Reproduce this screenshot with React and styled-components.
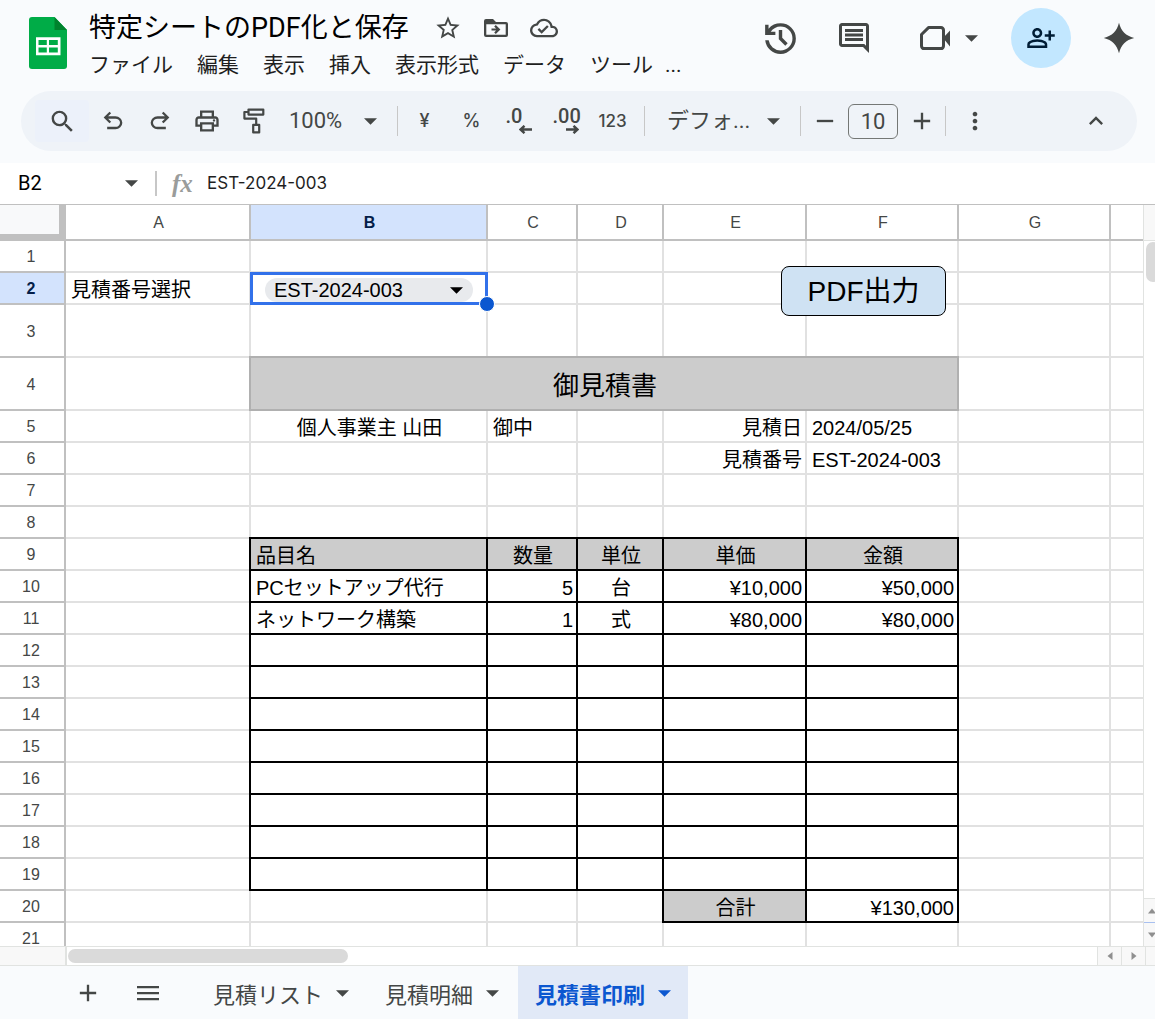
import React from "react";
import styled, { createGlobalStyle, css } from "styled-components";
import {
  MdAdd,
  MdKeyboardArrowUp,
  MdMoreVert,
  MdOutlineCloudDone,
  MdOutlineComment,
  MdOutlinePersonAddAlt,
  MdOutlinePrint,
  MdRemove,
  MdSearch,
  MdStarBorder,
} from "react-icons/md";

const sheetFont = '"Liberation Sans", "Noto Sans CJK JP", sans-serif';
const uiFont = 'Roboto, "Noto Sans CJK JP", sans-serif';
const numberFont = 'Inter, "Noto Sans CJK JP", sans-serif';
const ink = "#444746";
const gridLine = "#e1e1e1";
const headLine = "#c0c0c0";
const shade = "#cccccc";

const GlobalStyle = createGlobalStyle`
  * { box-sizing: border-box; }
  body { margin: 0; background: #ffffff; font-family: ${uiFont}; }
  button, input, select { font: inherit; color: inherit; margin: 0; }
`;

const Page = styled.div`
  display: flex;
  flex-direction: column;
  height: 100vh;
  overflow: hidden;
  background: #ffffff;
`;

const Top = styled.header`
  background: #f9fbfd;
  padding-bottom: 12px;
`;

const TitleBar = styled.div`
  display: flex;
  justify-content: space-between;
  height: 91px;
  padding: 0 18px 0 29px;
`;

const Brand = styled.div`
  display: flex;
  gap: 22px;
`;

const LogoLink = styled.a`
  display: block;
  padding-top: 17px;
  height: 69px;
`;

const TitleColumn = styled.div`
  display: flex;
  flex-direction: column;
  gap: 4px;
  padding-top: 9px;
`;

const TitleRow = styled.div`
  display: flex;
  align-items: center;
  height: 38px;
  gap: 20px;
`;

const DocTitle = styled.h1`
  margin: 0 5px 0 0;
  font: 400 27px/38px ${uiFont};
  color: #000000;
  white-space: nowrap;
`;

const Menu = styled.nav`
  display: flex;
  gap: 24px;
`;

const IconButton = styled.button`
  display: flex;
  align-items: center;
  justify-content: center;
  flex: none;
  padding: 0;
  border: 0;
  background: transparent;
  color: ${ink};
  cursor: pointer;
`;

const MenuButton = styled(IconButton)`
  font: 400 21px/28px ${uiFont};
  color: #1f1f1f;
  white-space: nowrap;
`;

const Actions = styled.div`
  display: flex;
  align-items: center;
  height: 76px;
  gap: 30px;
`;

const ItemGroup = styled.div`
  display: flex;
  align-items: center;
  gap: ${(p) => p.$gap}px;
`;

const ShareButton = styled(IconButton)`
  width: 60px;
  height: 60px;
  margin-left: 3px;
  border-radius: 50%;
  background: #c2e7ff;
  color: #001d35;
`;

const Toolbar = styled.div`
  display: flex;
  align-items: center;
  height: 60px;
  margin: 0 18px 0 21px;
  padding: 0 18px 0 14px;
  border-radius: 30px;
  background: #eff3f8;
  color: ${ink};
`;

const Tool = styled(IconButton)`
  width: 47px;
  height: 42px;
  font: 500 ${(p) => p.$size || 18}px/24px ${numberFont};
`;

const SearchTool = styled(Tool)`
  width: 54px;
  border-radius: 4px;
  background: #ecf1fa;
`;

const LastTool = styled(Tool)`
  margin-left: auto;
`;

const Decimal = styled.span`
  display: flex;
  flex-direction: column;
  width: 26px;
  font: 500 20px/17px ${uiFont};
  text-align: left;

  svg {
    align-self: flex-end;
  }
`;

const Divider = styled.span`
  width: 1px;
  height: 30px;
  flex: none;
  margin: 0 ${(p) => p.$after || 0}px 0 ${(p) => p.$before || 0}px;
  background: #c7c7c7;
`;

const Picker = styled.span`
  display: grid;
  align-items: center;
  flex: none;
  width: ${(p) => p.$width}px;
  margin: 0 20px 0 ${(p) => p.$before}px;

  select {
    grid-area: 1 / 1;
    appearance: none;
    padding: 0;
    border: 0;
    background: transparent;
    font: 400 22px/32px ${uiFont};
    outline: 0;
  }

  svg {
    grid-area: 1 / 1;
    justify-self: end;
    pointer-events: none;
  }
`;

const SizeInput = styled.input`
  width: 50px;
  height: 35px;
  padding: 0;
  border: 1px solid #747775;
  border-radius: 6px;
  background: transparent;
  text-align: center;
  font: 400 22px/32px ${uiFont};
`;

const FormulaBar = styled.div`
  display: flex;
  align-items: center;
  flex: none;
  height: 42px;
  padding-left: 18px;
  border-bottom: 1px solid ${headLine};
`;

const NameBox = styled.input`
  width: 107px;
  padding: 0 0 2px;
  border: 0;
  font: 400 20px/24px ${uiFont};
  color: #000000;
`;

const FormulaDivider = styled.span`
  width: 2px;
  height: 25px;
  margin: 0 15px 0 17px;
  background: #c7c7c7;
`;

const Fx = styled.label`
  width: 35px;
  font: italic 700 25px/28px "Liberation Serif", serif;
  color: #9a9c9b;
`;

const FormulaInput = styled.input`
  flex: 1;
  min-width: 0;
  padding: 0 0 2px;
  border: 0;
  font: 400 17px/24px ${numberFont};
  color: #1f1f1f;
`;

const Main = styled.main`
  display: flex;
  flex: 1;
  min-height: 0;
`;

const GridView = styled.div`
  position: relative;
  flex: 1;
  min-width: 0;
  overflow: hidden;
`;

const Sheet = styled.table`
  width: 100%;
  table-layout: fixed;
  border-collapse: collapse;
  font: 400 20px/24px ${sheetFont};
  color: #000000;
`;

const Col = styled.col`
  width: ${(p) => (p.$width ? `${p.$width}px` : "auto")};
`;

const Row = styled.tr`
  height: ${(p) => p.$height}px;
`;

const HeadCell = styled.th`
  padding: 2px 0 0 2px;
  border-right: 2px solid ${headLine};
  border-bottom: 2px solid ${headLine};
  background: ${(p) => (p.$active ? "#d3e3fd" : "#ffffff")};
  color: ${(p) => (p.$active ? "#041e49" : ink)};
  font: ${(p) => (p.$active ? 700 : 400)} 16px/20px ${sheetFont};

  ${(p) => p.$open && css`border-right: 0;`}
`;

const RowHead = styled(HeadCell)`
  padding: 2px 2px 0 0;
`;

const Corner = styled.th`
  padding: 0;
  border-right: 2px solid ${headLine};
  border-bottom: 2px solid ${headLine};
  background: #f8f9fa;
  box-shadow: inset -5px -5px 0 ${headLine};
`;

// A drawn border is "double" so that it wins over plain grid lines where they cross.
const Cell = styled.td`
  position: relative;
  padding: 4px 3px 0 5px;
  border-right: 2px ${(p) => (p.$right ? "double" : "solid")} ${(p) => p.$right || gridLine};
  border-bottom: 2px ${(p) => (p.$bottom ? "double" : "solid")} ${(p) => p.$bottom || gridLine};
  background: ${(p) => (p.$shaded ? shade : "transparent")};
  text-align: ${(p) => p.$align || "left"};
  font-size: ${(p) => (p.$large ? 26 : 20)}px;
  white-space: nowrap;

  ${(p) => p.$open && css`border-right: 0;`}
`;

const Selection = styled.div`
  position: absolute;
  inset: -1px -2px -2px -1px;
  border: 3px solid #3271ea;
  pointer-events: none;

  &::after {
    content: "";
    position: absolute;
    right: -10px;
    bottom: -10px;
    width: 14px;
    height: 14px;
    border: 1px solid #ffffff;
    border-radius: 50%;
    background: #0b57d0;
  }
`;

const Chip = styled.span`
  display: grid;
  align-items: center;
  height: 24px;
  margin: 0 10px 0 9px;
  border-radius: 12px;
  background: #e8eaed;

  select {
    grid-area: 1 / 1;
    appearance: none;
    height: 24px;
    padding: 0 9px;
    border: 0;
    background: transparent;
    font: 400 20px/24px ${sheetFont};
  }

  svg {
    grid-area: 1 / 1;
    justify-self: end;
    margin-right: 10px;
    pointer-events: none;
  }
`;

const ExportButton = styled.button`
  position: absolute;
  left: 781px;
  top: 61px;
  width: 165px;
  height: 50px;
  padding: 2px 0 0;
  border: 1px solid #000000;
  border-radius: 8px;
  background: #cfe2f3;
  font: 400 28px/36px ${sheetFont};
  color: #000000;
`;

const VerticalBar = styled.div`
  display: flex;
  flex-direction: column;
  flex: none;
  width: 12px;
  overflow: hidden;
  border-left: 1px solid #e1e3e1;
`;

const BarCap = styled.div`
  flex: none;
  height: 36px;
  border-bottom: 1px solid #e1e3e1;
  background: #f8f8f8;
`;

const BarTrack = styled.div`
  flex: 1;
  padding: 1px 0 0 2px;
`;

const VerticalThumb = styled.div`
  width: 14px;
  height: 40px;
  border-radius: 7px;
  background: #dadada;
`;

const BarButton = styled(IconButton)`
  width: ${(p) => (p.$wide ? 24 : 16)}px;
  height: ${(p) => (p.$wide ? 18 : 24)}px;
  border-top: ${(p) => (p.$wide ? 0 : 1)}px solid ${(p) => p.$line || "#e1e3e1"};
  border-left: ${(p) => (p.$wide ? 1 : 0)}px solid #e1e3e1;
  background: #f8f8f8;
  color: #8f8f8f;
`;

const HorizontalBar = styled.div`
  display: flex;
  flex: none;
  height: 19px;
  border-top: 1px solid #e1e3e1;
`;

const BarStart = styled.div`
  width: 67px;
  border-right: 2px solid #e1e3e1;
  background: #f8f8f8;
`;

const HorizontalTrack = styled.div`
  flex: 1;
  padding: 2px 1px;
`;

const HorizontalThumb = styled.div`
  width: 280px;
  height: 14px;
  border-radius: 7px;
  background: #dadada;
`;

const BarEnd = styled.div`
  width: 10px;
  border-left: 1px solid #e1e3e1;
  background: #f8f8f8;
`;

const TabBar = styled.footer`
  display: flex;
  flex: none;
  gap: 2px;
  height: 54px;
  padding-left: 74px;
  border-top: 1px solid #e1e3e1;
  background: #f9fbfd;
`;

const TabTools = styled.div`
  display: flex;
  align-items: center;
  gap: 35px;
  width: 120px;
`;

const Tab = styled.button`
  display: flex;
  align-items: center;
  gap: 13px;
  padding: 6px 17px 0 17px;
  border: 0;
  background: ${(p) => (p.$active ? "#e1e9f7" : "transparent")};
  color: ${(p) => (p.$active ? "#0b57d0" : ink)};
  font: ${(p) => (p.$active ? 700 : 400)} 22px/30px ${uiFont};
  white-space: nowrap;

  svg {
    margin-bottom: 4px;
  }
`;

function Caret({ size = 13 }) {
  return (
    <svg width={size} height="7" viewBox="0 0 14 7" fill="currentColor" aria-hidden="true">
      <path d="M0 0h14L7 7z" />
    </svg>
  );
}

function SheetsLogo() {
  return (
    <svg width="38" height="52" viewBox="0 0 38 52" aria-hidden="true">
      <path d="M3 0h22.500L38 13v36a3 3 0 0 1-3 3H3a3 3 0 0 1-3-3V3a3 3 0 0 1 3-3z" fill="#00ac47" />
      <path d="M25.500 0L38 13H25.500z" fill="#00832d" />
      <path
        fill="#ffffff"
        fillRule="evenodd"
        d="M7 20.300h24.500v18H7zM9.500 23v5h8.300v-5zM20 23v5h8.800v-5zM9.500 30.500v5h8.300v-5zM20 30.500v5h8.800v-5z"
      />
    </svg>
  );
}

function Symbol({ path, size = 28 }) {
  return (
    <svg width={size} height={size} viewBox="0 -960 960 960" fill="currentColor" aria-hidden="true">
      <path d={path} />
    </svg>
  );
}

const undoPath =
  "M280-200v-80h284q63 0 109.500-40T720-420q0-60-46.500-100T564-560H312l104 104-56 56-200-200 200-200 56 56-104 104h252q97 0 166.500 63T800-420q0 94-69.500 157T564-200H280Z";
const redoPath =
  "M396-200q-97 0-166.500-63T160-420q0-94 69.500-157T396-640h252L544-744l56-56 200 200-200 200-56-56 104-104H396q-63 0-109.500 40T240-420q0 60 46.500 100T396-280h284v80H396Z";
const historyPath =
  "M480-120q-138 0-240.500-91.500T122-440h82q14 104 92.500 172T480-200q117 0 198.500-81.500T760-480q0-117-81.500-198.500T480-760q-69 0-129 32t-101 88h110v80H120v-240h80v94q51-64 124.500-99T480-840q75 0 140.500 28.500t114 77q48.500 48.500 77 114T840-480q0 75-28.500 140.500t-77 114q-48.500 48.500-114 77T480-120Zm112-192L440-464v-216h80v184l128 128-56 56Z";

function MoveFolder() {
  return (
    <svg width="28" height="28" viewBox="0 0 28 28" fill="currentColor" aria-hidden="true">
      <path
        fillRule="evenodd"
        d="M4 5h7l3 3h10a2 2 0 0 1 2 2v11a2 2 0 0 1-2 2H4a2 2 0 0 1-2-2V7a2 2 0 0 1 2-2zM4.300 10.300v10.400h19.400V10.300z"
      />
      <path d="M9.500 14.400h4.600l-1.900-1.900 1.600-1.600 4.600 4.600-4.600 4.600-1.600-1.600 1.900-1.900H9.500z" />
    </svg>
  );
}

function PaintRoller() {
  return (
    <svg width="22" height="26" viewBox="0 0 22 26" fill="none" stroke="currentColor" strokeWidth="2.200" aria-hidden="true">
      <path d="M5.500 1.600h14.800v5H5.500zM5.500 4H1.400v6.600h11.800v6M10.200 16.800h6v7.600h-6z" strokeLinejoin="round" />
    </svg>
  );
}

function VideoCall() {
  return (
    <svg width="36" height="36" viewBox="0 0 36 36" aria-hidden="true">
      <path
        d="M11.500 7.600H24a2.500 2.500 0 0 1 2.500 2.500v16a2.500 2.500 0 0 1-2.500 2.500H7a2.500 2.500 0 0 1-2.500-2.500V14.500z"
        fill="none"
        stroke="currentColor"
        strokeWidth="3"
        strokeLinejoin="round"
      />
      <path d="M26 18l7-7.500v16z" fill="currentColor" />
    </svg>
  );
}

function Spark() {
  return (
    <svg width="36" height="36" viewBox="0 0 36 36" fill="currentColor" aria-hidden="true">
      <path d="M18 2.800c2.200 8.500 6.700 13 15.200 15.200C24.700 20.200 20.200 24.700 18 33.200 15.800 24.700 11.300 20.200 2.800 18 11.300 15.800 15.800 11.300 18 2.800z" />
    </svg>
  );
}

function Arrow({ right }) {
  return (
    <svg width="13" height="9" viewBox="0 0 13 9" fill="none" stroke="currentColor" strokeWidth="2.400" aria-hidden="true">
      <path d={right ? "M0 4.500h11M7.500 .8l4 3.700-4 3.700" : "M13 4.500H2M5.500 .8L1.500 4.500l4 3.700"} />
    </svg>
  );
}

function MenuLines() {
  return (
    <svg width="22" height="16" viewBox="0 0 22 16" fill="currentColor" aria-hidden="true">
      <path d="M0 1h22v2.300H0zM0 7h22v2.300H0zM0 13h22v2.300H0z" />
    </svg>
  );
}

function ScrollArrow({ angle }) {
  return (
    <svg width="8" height="8" viewBox="0 0 8 8" fill="currentColor" aria-hidden="true">
      <path d="M0 6.500h8L4 1.500z" transform={`rotate(${angle} 4 4)`} />
    </svg>
  );
}

const menuItems = ["ファイル", "編集", "表示", "挿入", "表示形式", "データ"];
const columns = ["A", "B", "C", "D", "E", "F", "G", ""];
const columnWidths = [65, 185, 237, 90, 86, 143, 152, 152, 0];
const rowNumbers = Array.from({ length: 21 }, (_, i) => i + 1);
const rowHeights = { 3: 53, 4: 53 };

const center = "center";
const right = "right";
const cells = {
  A2: { text: "見積番号選択" },
  B4: { text: "御見積書", align: center, large: true, shaded: true, span: 5 },
  B5: { text: "個人事業主 山田", align: center },
  C5: { text: "御中" },
  E5: { text: "見積日", align: right },
  F5: { text: "2024/05/25" },
  E6: { text: "見積番号", align: right },
  F6: { text: "EST-2024-003" },
  B9: { text: "品目名", shaded: true },
  C9: { text: "数量", align: center, shaded: true },
  D9: { text: "単位", align: center, shaded: true },
  E9: { text: "単価", align: center, shaded: true },
  F9: { text: "金額", align: center, shaded: true },
  B10: { text: "PCセットアップ代行" },
  C10: { text: "5", align: right },
  D10: { text: "台", align: center },
  E10: { text: "¥10,000", align: right },
  F10: { text: "¥50,000", align: right },
  B11: { text: "ネットワーク構築" },
  C11: { text: "1", align: right },
  D11: { text: "式", align: center },
  E11: { text: "¥80,000", align: right },
  F11: { text: "¥80,000", align: right },
  E20: { text: "合計", align: center, shaded: true },
  F20: { text: "¥130,000", align: right },
};

// Each cell owns the line on its right and the line below it.
function lineColors(col, row) {
  const inTable = col >= 1 && col <= 5;
  const titleEdge = "#b0b0b0";
  let rightLine;
  let bottomLine;
  if (row === 4 && col <= 5) rightLine = titleEdge;
  if (inTable && (row === 3 || row === 4)) bottomLine = titleEdge;
  if (row >= 9 && row <= 19 && col <= 5) rightLine = "#000000";
  if (row === 20 && col >= 3 && col <= 5) rightLine = "#000000";
  if (inTable && row >= 8 && row <= 19) bottomLine = "#000000";
  if (row === 20 && (col === 4 || col === 5)) bottomLine = "#000000";
  return { rightLine, bottomLine };
}

function SheetCell({ col, row }) {
  const name = `${columns[col]}${row}`;
  const data = cells[name] || {};
  const { rightLine, bottomLine } = lineColors(col, row);
  return (
    <Cell
      colSpan={data.span}
      $align={data.align}
      $large={data.large}
      $shaded={data.shaded}
      $right={rightLine}
      $bottom={bottomLine}
      $open={col === 7}
    >
      {name === "B2" ? (
        <>
          <Chip>
            <select aria-label="見積番号選択" defaultValue="EST-2024-003">
              <option>EST-2024-003</option>
            </select>
            <Caret />
          </Chip>
          <Selection />
        </>
      ) : (
        data.text
      )}
    </Cell>
  );
}

function SheetGrid() {
  return (
    <Sheet>
      <colgroup>
        {columnWidths.map((width, i) => (
          <Col key={i} $width={width} />
        ))}
      </colgroup>
      <thead>
        <Row $height={35}>
          <Corner />
          {columns.map((name, i) => (
            <HeadCell key={i} scope="col" $active={name === "B"} $open={i === 7}>
              {name}
            </HeadCell>
          ))}
        </Row>
      </thead>
      <tbody>
        {rowNumbers.map((row) => (
          <Row key={row} $height={rowHeights[row] || 32}>
            <RowHead scope="row" $active={row === 2}>
              {row}
            </RowHead>
            {columns.map((_, col) =>
              row === 4 && col > 1 && col < 6 ? null : <SheetCell key={col} col={col} row={row} />
            )}
          </Row>
        ))}
      </tbody>
    </Sheet>
  );
}

export default function App() {
  return (
    <Page>
      <GlobalStyle />
      <Top>
        <TitleBar>
          <Brand>
            <LogoLink href="#" aria-label="スプレッドシート ホーム">
              <SheetsLogo />
            </LogoLink>
            <TitleColumn>
              <TitleRow>
                <DocTitle>特定シートのPDF化と保存</DocTitle>
                <IconButton aria-label="スター"><MdStarBorder size={28} /></IconButton>
                <IconButton aria-label="移動"><MoveFolder /></IconButton>
                <IconButton aria-label="保存状態"><MdOutlineCloudDone size={28} /></IconButton>
              </TitleRow>
              <Menu>
                {menuItems.map((item) => (
                  <MenuButton key={item}>{item}</MenuButton>
                ))}
                <ItemGroup $gap={12}>
                  <MenuButton>ツール</MenuButton>
                  <MenuButton aria-label="その他">...</MenuButton>
                </ItemGroup>
              </Menu>
            </TitleColumn>
          </Brand>
          <Actions>
            <ItemGroup $gap={45}>
              <ItemGroup $gap={35}>
                <IconButton aria-label="変更履歴"><Symbol path={historyPath} size={41} /></IconButton>
                <IconButton aria-label="コメント"><MdOutlineComment size={36} /></IconButton>
              </ItemGroup>
              <ItemGroup $gap={12}>
                <IconButton aria-label="ビデオ通話"><VideoCall /></IconButton>
                <IconButton aria-label="ビデオ通話のメニュー"><Caret /></IconButton>
              </ItemGroup>
            </ItemGroup>
            <ShareButton aria-label="共有"><MdOutlinePersonAddAlt size={30} /></ShareButton>
            <IconButton aria-label="Gemini"><Spark /></IconButton>
          </Actions>
        </TitleBar>
        <Toolbar role="toolbar">
          <SearchTool aria-label="検索"><MdSearch size={29} /></SearchTool>
          <Tool aria-label="元に戻す"><Symbol path={undoPath} /></Tool>
          <Tool aria-label="やり直し"><Symbol path={redoPath} /></Tool>
          <Tool aria-label="印刷"><MdOutlinePrint size={28} /></Tool>
          <Tool aria-label="書式を貼り付け"><PaintRoller /></Tool>
          <Picker $width={88} $before={12}>
            <select aria-label="ズーム"><option>100%</option></select>
            <Caret />
          </Picker>
          <Divider $after={3} />
          <Tool $size={18}>¥</Tool>
          <Tool $size={18}>%</Tool>
          <Tool aria-label="小数点以下の桁数を減らす"><Decimal>.0<Arrow /></Decimal></Tool>
          <Tool aria-label="小数点以下の桁数を増やす"><Decimal>.00<Arrow right /></Decimal></Tool>
          <Tool $size={17}>123</Tool>
          <Divider $before={8} />
          <Picker $width={113} $before={22}>
            <select aria-label="フォント"><option>デフォ...</option></select>
            <Caret />
          </Picker>
          <Divider />
          <Tool aria-label="フォントサイズを縮小"><MdRemove size={28} /></Tool>
          <SizeInput aria-label="フォントサイズ" defaultValue="10" />
          <Tool aria-label="フォントサイズを拡大"><MdAdd size={28} /></Tool>
          <Divider $after={5} />
          <Tool aria-label="その他のツール"><MdMoreVert size={28} /></Tool>
          <LastTool aria-label="メニューを非表示"><MdKeyboardArrowUp size={28} /></LastTool>
        </Toolbar>
      </Top>
      <FormulaBar>
        <NameBox aria-label="名前ボックス" defaultValue="B2" />
        <IconButton aria-label="名前付き範囲"><Caret /></IconButton>
        <FormulaDivider />
        <Fx htmlFor="formula">fx</Fx>
        <FormulaInput id="formula" defaultValue="EST-2024-003" />
      </FormulaBar>
      <Main>
        <GridView>
          <SheetGrid />
          <ExportButton>PDF出力</ExportButton>
        </GridView>
        <VerticalBar>
          <BarCap />
          <BarTrack><VerticalThumb /></BarTrack>
          <BarButton aria-label="上へスクロール"><ScrollArrow angle={0} /></BarButton>
          <BarButton aria-label="下へスクロール" $line="#a8c0f0"><ScrollArrow angle={180} /></BarButton>
        </VerticalBar>
      </Main>
      <HorizontalBar>
        <BarStart />
        <HorizontalTrack><HorizontalThumb /></HorizontalTrack>
        <BarButton $wide aria-label="左へスクロール"><ScrollArrow angle={270} /></BarButton>
        <BarButton $wide aria-label="右へスクロール"><ScrollArrow angle={90} /></BarButton>
        <BarEnd />
      </HorizontalBar>
      <TabBar>
        <TabTools>
          <IconButton aria-label="シートを追加"><MdAdd size={28} /></IconButton>
          <IconButton aria-label="すべてのシート"><MenuLines /></IconButton>
        </TabTools>
        <Tab>見積リスト<Caret /></Tab>
        <Tab>見積明細<Caret /></Tab>
        <Tab $active>見積書印刷<Caret /></Tab>
      </TabBar>
    </Page>
  );
}
